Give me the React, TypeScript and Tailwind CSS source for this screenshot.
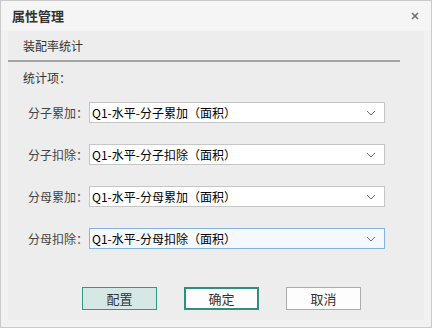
const font = { fontFamily: '"Noto Sans CJK SC", "Microsoft YaHei", sans-serif' };

const rows = [
  { label: '分子累加：', value: 'Q1-水平-分子累加（面积）' },
  { label: '分子扣除：', value: 'Q1-水平-分子扣除（面积）' },
  { label: '分母累加：', value: 'Q1-水平-分母累加（面积）' },
  { label: '分母扣除：', value: 'Q1-水平-分母扣除（面积）', focused: true },
];

const Chevron = () => (
  <svg width="10" height="6" viewBox="0 0 10 6" fill="none">
    <path d="M1 1l4 4 4-4" stroke="#707070" strokeWidth="1" />
  </svg>
);

const CloseIcon = () => (
  <svg width="8" height="8" viewBox="0 0 8 8" fill="none">
    <path d="M1 1l6 6M7 1L1 7" stroke="#707070" strokeWidth="1.6" />
  </svg>
);

const App = () => {
  return (
    <div
      className="w-[432px] h-[328px] border border-[#cacaca] bg-[#f2f2f2] flex flex-col text-[#333]"
      style={font}
    >
      <div className="h-[30px] bg-[#f5f5f5] flex items-center justify-between pl-[11px] pr-[12px]">
        <span className="text-[13px] font-bold text-[#333]">属性管理</span>
        <CloseIcon />
      </div>

      <div className="flex-1 mx-[7px] mb-[7px] bg-[#ededed] flex flex-col">
        <div className="h-[29px] flex items-center pl-[15px] text-[12px]">装配率统计</div>
        <div className="w-[392px] h-[2px] bg-[#a3a3a3]" />

        <div className="mt-[8px] pl-[15px] text-[12px] leading-[16px]">统计项：</div>

        <div className="mt-[16px] flex flex-col gap-[21px]">
          {rows.map((row) => (
            <div key={row.label} className="flex items-center h-[21px]">
              <span className="w-[81px] pl-[20px] text-[12px] text-[#444]">{row.label}</span>
              <div
                className={
                  row.focused
                    ? 'w-[296px] h-[21px] border border-[#85b3e0] bg-[#f5f9ff] flex items-center justify-between pl-[2px] pr-[8px]'
                    : 'w-[296px] h-[21px] border border-[#c6c6c6] bg-white flex items-center justify-between pl-[2px] pr-[8px]'
                }
              >
                <span className="text-[12px] text-black">{row.value}</span>
                <Chevron />
              </div>
            </div>
          ))}
        </div>

        <div className="mt-[38px] pl-[74px] flex gap-[27px]">
          <button className="w-[75px] h-[23px] border border-[#2f9883] bg-[#d5e8e5] text-[13px] text-[#333]">
            配置
          </button>
          <button className="w-[75px] h-[23px] border-2 border-[#2f8f7c] bg-[#fdfdfd] text-[13px] text-[#333]">
            确定
          </button>
          <button className="w-[75px] h-[23px] border border-[#ababab] bg-[#fdfdfd] text-[13px] text-[#333]">
            取消
          </button>
        </div>
      </div>
    </div>
  );
};

export default App;
